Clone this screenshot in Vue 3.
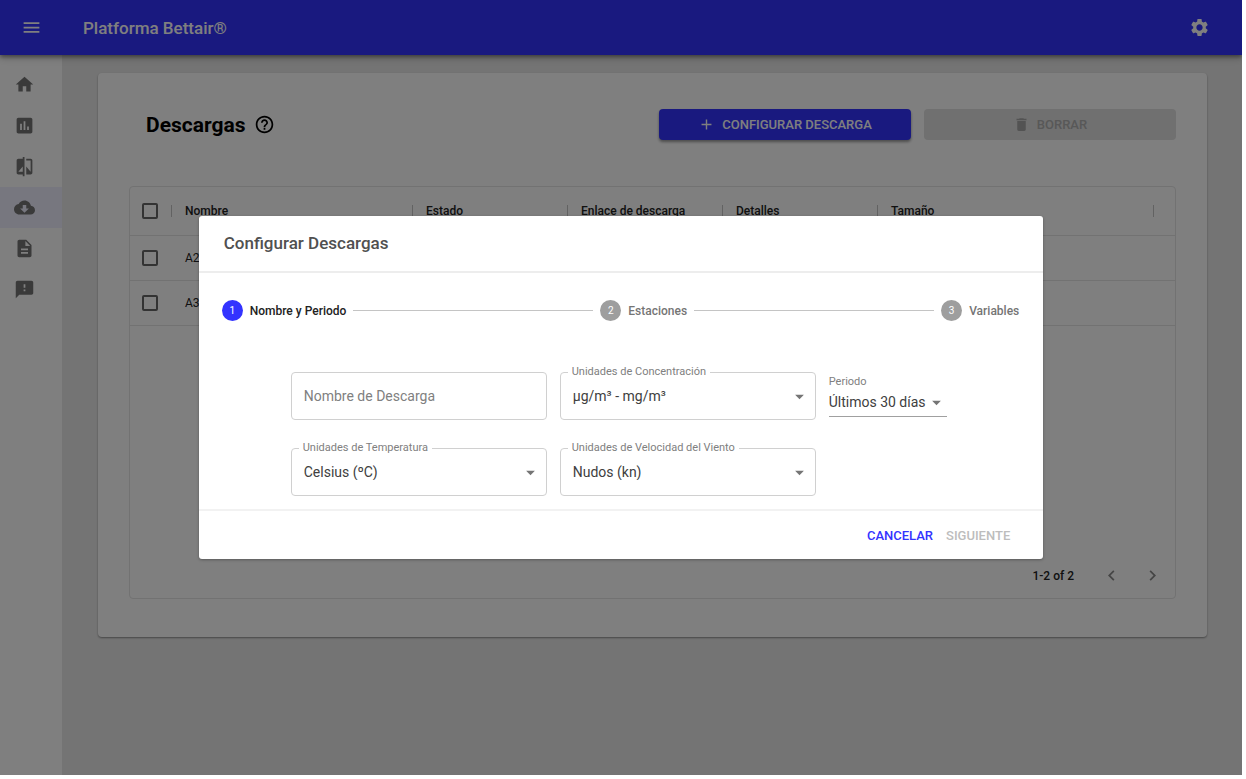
<script setup>
import { ref } from 'vue'

const icons = {
  menu: 'M3 18h18v-2H3v2zm0-5h18v-2H3v2zm0-7v2h18V6H3z',
  settings:
    'M19.14 12.94c.04-.3.06-.61.06-.94 0-.32-.02-.64-.07-.94l2.03-1.58c.18-.14.23-.41.12-.61l-1.92-3.32c-.12-.22-.37-.29-.59-.22l-2.39.96c-.5-.38-1.03-.7-1.62-.94l-.36-2.54c-.04-.24-.24-.41-.48-.41h-3.84c-.24 0-.43.17-.47.41l-.36 2.54c-.59.24-1.13.57-1.62.94l-2.39-.96c-.22-.08-.47 0-.59.22L2.74 8.87c-.12.21-.08.47.12.61l2.03 1.58c-.05.3-.09.63-.09.94s.02.64.07.94l-2.03 1.58c-.18.14-.23.41-.12.61l1.92 3.32c.12.22.37.29.59.22l2.39-.96c.5.38 1.03.7 1.62.94l.36 2.54c.05.24.24.41.48.41h3.84c.24 0 .44-.17.47-.41l.36-2.54c.59-.24 1.13-.56 1.62-.94l2.39.96c.22.08.47 0 .59-.22l1.92-3.32c.12-.22.07-.47-.12-.61l-2.01-1.58zM12 15.6c-1.98 0-3.6-1.62-3.6-3.6s1.62-3.6 3.6-3.6 3.6 1.62 3.6 3.6-1.62 3.6-3.6 3.6z',
  home: 'M10 20v-6h4v6h5v-8h3L12 3 2 12h3v8z',
  chart:
    'M19 3H5c-1.1 0-2 .9-2 2v14c0 1.1.9 2 2 2h14c1.1 0 2-.9 2-2V5c0-1.1-.9-2-2-2zM9 17H7v-7h2v7zm4 0h-2V7h2v10zm4 0h-2v-4h2v4z',
  compare:
    'M10 3H5c-1.1 0-2 .9-2 2v14c0 1.1.9 2 2 2h5v2h2V1h-2v2zm0 15H5l5-6v6zm9-15h-5v2h5v13l-5-6v9h5c1.1 0 2-.9 2-2V5c0-1.1-.9-2-2-2z',
  cloud:
    'M19.35 10.04C18.67 6.59 15.64 4 12 4 9.11 4 6.6 5.64 5.35 8.04 2.34 8.36 0 10.91 0 14c0 3.31 2.69 6 6 6h13c2.76 0 5-2.24 5-5 0-2.64-2.05-4.78-4.65-4.96zM17 13l-5 5-5-5h3V9h4v4h3z',
  document:
    'M14 2H6c-1.1 0-1.99.9-1.99 2L4 20c0 1.1.89 2 1.99 2H18c1.1 0 2-.9 2-2V8l-6-6zm2 16H8v-2h8v2zm0-4H8v-2h8v2zm-3-5V3.5L18.5 9H13z',
  feedback:
    'M20 2H4c-1.1 0-1.99.9-1.99 2L2 22l4-4h14c1.1 0 2-.9 2-2V4c0-1.1-.9-2-2-2zm-7 12h-2v-2h2v2zm0-4h-2V6h2v4z',
  help: 'M11 18h2v-2h-2v2zm1-16C6.48 2 2 6.48 2 12s4.48 10 10 10 10-4.48 10-10S17.52 2 12 2zm0 18c-4.41 0-8-3.59-8-8s3.59-8 8-8 8 3.59 8 8-3.59 8-8 8zm0-14c-2.21 0-4 1.79-4 4h2c0-1.1.9-2 2-2s2 .9 2 2c0 2-3 1.75-3 5h2c0-2.25 3-2.5 3-5 0-2.21-1.79-4-4-4z',
  add: 'M19 13h-6v6h-2v-6H5v-2h6V5h2v6h6v2z',
  trash: 'M6 19c0 1.1.9 2 2 2h8c1.1 0 2-.9 2-2V7H6v12zM19 4h-3.5l-1-1h-5l-1 1H5v2h14V4z',
  caret: 'M7 10l5 5 5-5z',
  left: 'M15.41 7.41L14 6l-6 6 6 6 1.41-1.41L10.83 12z',
  right: 'M10 6L8.59 7.41 13.17 12l-4.58 4.59L10 18l6-6z',
}

const nav = [
  { icon: 'home', label: 'Inicio' },
  { icon: 'chart', label: 'Gráficos' },
  { icon: 'compare', label: 'Comparar' },
  { icon: 'cloud', label: 'Descargas', active: true },
  { icon: 'document', label: 'Informes' },
  { icon: 'feedback', label: 'Avisos' },
]
const columns = ['Nombre', 'Estado', 'Enlace de descarga', 'Detalles', 'Tamaño']
const rows = ['A2', 'A3']
const steps = ['Nombre y Periodo', 'Estaciones', 'Variables']

const name = ref('')
const concentration = ref('µg/m³ - mg/m³')
const temperature = ref('Celsius (ºC)')
const wind = ref('Nudos (kn)')
const period = ref('Últimos 30 días')
</script>

<template>
  <div class="app">
    <header class="topbar">
      <button class="icon-btn" aria-label="Menú">
        <svg class="icon" viewBox="0 0 24 24"><path :d="icons.menu" /></svg>
      </button>
      <span class="brand">Platforma Bettair®</span>
      <button class="icon-btn" aria-label="Ajustes">
        <svg class="icon" viewBox="0 0 24 24"><path :d="icons.settings" /></svg>
      </button>
    </header>

    <div class="body">
      <nav class="sidebar">
        <a v-for="n in nav" :key="n.icon" href="#" :aria-label="n.label" :class="['nav-item', { active: n.active }]">
          <svg class="icon" viewBox="0 0 24 24"><path :d="icons[n.icon]" /></svg>
        </a>
      </nav>

      <main class="main">
        <section class="card">
          <div class="card-head">
            <h1>Descargas</h1>
            <svg class="icon help" viewBox="0 0 24 24"><path :d="icons.help" /></svg>
            <div class="actions">
              <button class="btn primary">
                <svg class="icon small" viewBox="0 0 24 24"><path :d="icons.add" /></svg>
                CONFIGURAR DESCARGA
              </button>
              <button class="btn" disabled>
                <svg class="icon small trash" viewBox="0 0 24 24"><path :d="icons.trash" /></svg>
                BORRAR
              </button>
            </div>
          </div>

          <div class="grid-box">
            <table>
              <colgroup>
                <col class="c-check" />
                <col class="c-name" />
                <col class="c-mid" />
                <col class="c-mid" />
                <col class="c-mid" />
                <col />
              </colgroup>
              <thead>
                <tr>
                  <th>
                    <div class="head-cell"><input type="checkbox" aria-label="Seleccionar todo" /><span class="sep"></span></div>
                  </th>
                  <th v-for="c in columns" :key="c">
                    <div class="head-cell">{{ c }}<span class="sep"></span></div>
                  </th>
                </tr>
              </thead>
              <tbody>
                <tr v-for="r in rows" :key="r">
                  <td><input type="checkbox" :aria-label="'Seleccionar ' + r" /></td>
                  <td>{{ r }}</td>
                  <td></td>
                  <td></td>
                  <td></td>
                  <td></td>
                </tr>
              </tbody>
            </table>
            <div class="pager">
              <span>1-2 of 2</span>
              <button class="page-btn" disabled aria-label="Anterior">
                <svg class="icon" viewBox="0 0 24 24"><path :d="icons.left" /></svg>
              </button>
              <button class="page-btn" disabled aria-label="Siguiente página">
                <svg class="icon" viewBox="0 0 24 24"><path :d="icons.right" /></svg>
              </button>
            </div>
          </div>
        </section>
      </main>
    </div>

    <div class="backdrop">
      <div class="dialog" role="dialog" aria-modal="true" aria-labelledby="dialog-title">
        <h2 id="dialog-title">Configurar Descargas</h2>

        <div class="dialog-body">
          <ol class="stepper">
            <template v-for="(s, i) in steps" :key="s">
              <li v-if="i > 0" class="connector" role="presentation"></li>
              <li :class="['step', { current: i === 0 }]">
                <span class="dot">{{ i + 1 }}</span>
                <span>{{ s }}</span>
              </li>
            </template>
          </ol>

          <form class="fields" @submit.prevent>
            <div class="field">
              <input v-model="name" class="control" type="text" aria-label="Nombre de Descarga" placeholder="Nombre de Descarga" />
            </div>
            <div class="field">
              <label for="conc">Unidades de Concentración</label>
              <select id="conc" v-model="concentration" class="control">
                <option>µg/m³ - mg/m³</option>
              </select>
              <svg class="icon caret" viewBox="0 0 24 24"><path :d="icons.caret" /></svg>
            </div>
            <div class="period">
              <label for="period">Periodo</label>
              <div class="line-select">
                <select id="period" v-model="period">
                  <option>Últimos 30 días</option>
                </select>
                <svg class="icon caret" viewBox="0 0 24 24"><path :d="icons.caret" /></svg>
              </div>
            </div>
            <div class="field">
              <label for="temp">Unidades de Temperatura</label>
              <select id="temp" v-model="temperature" class="control">
                <option>Celsius (ºC)</option>
              </select>
              <svg class="icon caret" viewBox="0 0 24 24"><path :d="icons.caret" /></svg>
            </div>
            <div class="field">
              <label for="wind">Unidades de Velocidad del Viento</label>
              <select id="wind" v-model="wind" class="control">
                <option>Nudos (kn)</option>
              </select>
              <svg class="icon caret" viewBox="0 0 24 24"><path :d="icons.caret" /></svg>
            </div>
          </form>
        </div>

        <div class="dialog-foot">
          <button class="text-btn">CANCELAR</button>
          <button class="text-btn" disabled>SIGUIENTE</button>
        </div>
      </div>
    </div>
  </div>
</template>

<style>
body {
  background: #fff;
}
</style>

<style scoped>
.app,
.app * {
  box-sizing: border-box;
}
.app {
  position: relative;
  display: flex;
  flex-direction: column;
  min-height: calc(100vh - 4px);
  margin: 0 4px 4px 0;
  overflow: hidden;
  font-family: Roboto, 'Liberation Sans', sans-serif;
  font-size: 12px;
  color: #222;
}
button,
input,
select {
  font: inherit;
  color: inherit;
}
button {
  border: 0;
  padding: 0;
  background: none;
}
.icon {
  display: block;
  flex: none;
  width: 21px;
  height: 21px;
  fill: currentColor;
}
.icon.small {
  width: 17px;
  height: 17px;
}
.topbar {
  position: relative;
  display: flex;
  align-items: center;
  height: 55px;
  padding: 0 32px 0 21px;
  background: #33f;
  color: #fff;
  box-shadow: 0 2px 4px rgba(0, 0, 0, 0.4), 0 4px 8px rgba(0, 0, 0, 0.14);
}
.brand {
  flex: 1;
  margin-left: 41px;
  font-size: 17px;
  font-weight: 500;
}
.body {
  display: flex;
  flex: 1;
}
.sidebar {
  width: 62px;
  padding-top: 9px;
  background: #fff;
  color: #757575;
}
.nav-item {
  display: flex;
  align-items: center;
  height: 41px;
  padding-left: 14px;
  color: inherit;
}
.nav-item.active {
  background: #eeeeff;
}
.main {
  flex: 1;
  padding: 18px 35px 24px 36px;
  background: #e9e9e9;
}
.card {
  padding: 36px 31px 38px;
  border-radius: 4px;
  background: #fff;
  box-shadow: 0 1px 2px rgba(0, 0, 0, 0.4);
}
.card-head {
  display: flex;
  align-items: center;
  padding-left: 17px;
}
h1 {
  margin: 0 9px 0 0;
  font-size: 21px;
  font-weight: 700;
  line-height: 24px;
  color: #000;
}
.help {
  color: #000;
}
.actions {
  display: grid;
  grid-template-columns: 1fr 1fr;
  gap: 13px;
  width: 517px;
  margin-left: auto;
}
.btn {
  display: flex;
  align-items: center;
  justify-content: center;
  gap: 7px;
  height: 31px;
  border-radius: 4px;
  background: #e0e0e0;
  color: #b0b0b0;
  font-size: 13px;
  font-weight: 500;
}
.btn.primary {
  background: #33f;
  color: #fff;
  box-shadow: 0 2px 3px rgba(0, 0, 0, 0.4);
}
.trash {
  color: #a6a6a6;
}
.grid-box {
  display: flex;
  flex-direction: column;
  min-height: 413px;
  margin-top: 46px;
  border: 1px solid #e4e4e4;
  border-radius: 4px;
}
table {
  width: 100%;
  border-collapse: collapse;
  table-layout: fixed;
}
.c-check {
  width: 42px;
}
.c-name {
  width: 241px;
}
.c-mid {
  width: 155px;
}
th,
td {
  height: 45px;
  padding: 0 0 0 13px;
  border-bottom: 1px solid #e4e4e4;
  text-align: left;
}
th {
  height: 48px;
  font-weight: 500;
}
th:first-child,
td:first-child {
  padding-left: 12px;
}
th:last-child {
  padding-right: 21px;
}
.head-cell {
  display: flex;
  align-items: center;
  justify-content: space-between;
}
.sep {
  width: 1px;
  height: 12px;
  background: #c4c4c4;
}
input[type='checkbox'] {
  display: block;
  appearance: none;
  width: 16px;
  height: 16px;
  margin: 0;
  border: 2px solid #666;
  border-radius: 2px;
}
.pager {
  display: flex;
  align-items: center;
  justify-content: flex-end;
  height: 45px;
  margin-top: auto;
  padding-right: 2px;
  font-weight: 500;
}
.pager span {
  margin-right: 17px;
}
.page-btn {
  display: grid;
  place-items: center;
  width: 41px;
  height: 41px;
  color: #8a8a8a;
}
.backdrop {
  position: absolute;
  inset: 0;
  display: flex;
  align-items: center;
  justify-content: center;
  background: rgba(0, 0, 0, 0.5);
}
.dialog {
  width: 68%;
  border-radius: 3px;
  background: #fff;
  box-shadow: 0 1px 3px rgba(0, 0, 0, 0.3);
}
h2 {
  margin: 0;
  padding: 17px 25px;
  font-size: 17px;
  font-weight: 500;
  line-height: 21px;
  color: #505050;
}
.dialog-body {
  padding: 27px 24px 13px 23px;
  border-top: 2px solid #ededed;
  border-bottom: 2px solid #f2f2f2;
}
.stepper {
  display: flex;
  align-items: center;
  gap: 7px;
  margin: 0;
  padding: 0;
  list-style: none;
  color: #757575;
}
.step {
  display: flex;
  align-items: center;
  gap: 7px;
  font-weight: 500;
}
.connector {
  flex: 1;
  height: 1px;
  background: #c4c4c4;
}
.step.current {
  color: #222;
}
.dot {
  display: grid;
  place-items: center;
  width: 21px;
  height: 21px;
  border-radius: 50%;
  background: #9e9e9e;
  color: #fff;
  font-size: 10px;
  font-weight: 400;
}
.current .dot {
  background: #33f;
}
.fields {
  display: grid;
  grid-template-columns: 256px 256px 118px;
  gap: 28px 13px;
  padding: 51px 0 0 69px;
}
.field {
  position: relative;
  height: 48px;
}
.field label {
  position: absolute;
  top: -6px;
  left: 8px;
  padding: 0 4px;
  background: #fff;
}
label {
  font-size: 11px;
  line-height: 12px;
  color: #808080;
}
.control {
  width: 100%;
  height: 100%;
  padding: 0 12px;
  border: 1px solid #d0d0d0;
  border-radius: 4px;
  background: transparent;
  appearance: none;
  font-size: 14px;
  color: #404040;
}
.control::placeholder {
  color: #808080;
  opacity: 1;
}
.caret {
  position: absolute;
  top: 14px;
  right: 6px;
  color: #757575;
  pointer-events: none;
}
.period {
  padding-top: 4px;
}
.period label {
  display: block;
}
.line-select {
  position: relative;
  border-bottom: 1px solid #a0a0a0;
}
.line-select select {
  display: block;
  width: 100%;
  height: 28px;
  border: 0;
  background: none;
  appearance: none;
  font-size: 14px;
  color: #404040;
}
.line-select .caret {
  top: 4px;
  right: 0;
}
.dialog-foot {
  display: flex;
  align-items: center;
  justify-content: flex-end;
  gap: 13px;
  height: 48px;
  padding-right: 33px;
}
.text-btn {
  color: #33f;
  font-size: 13px;
  font-weight: 500;
}
.text-btn:disabled {
  color: #bdbdbd;
}
</style>
